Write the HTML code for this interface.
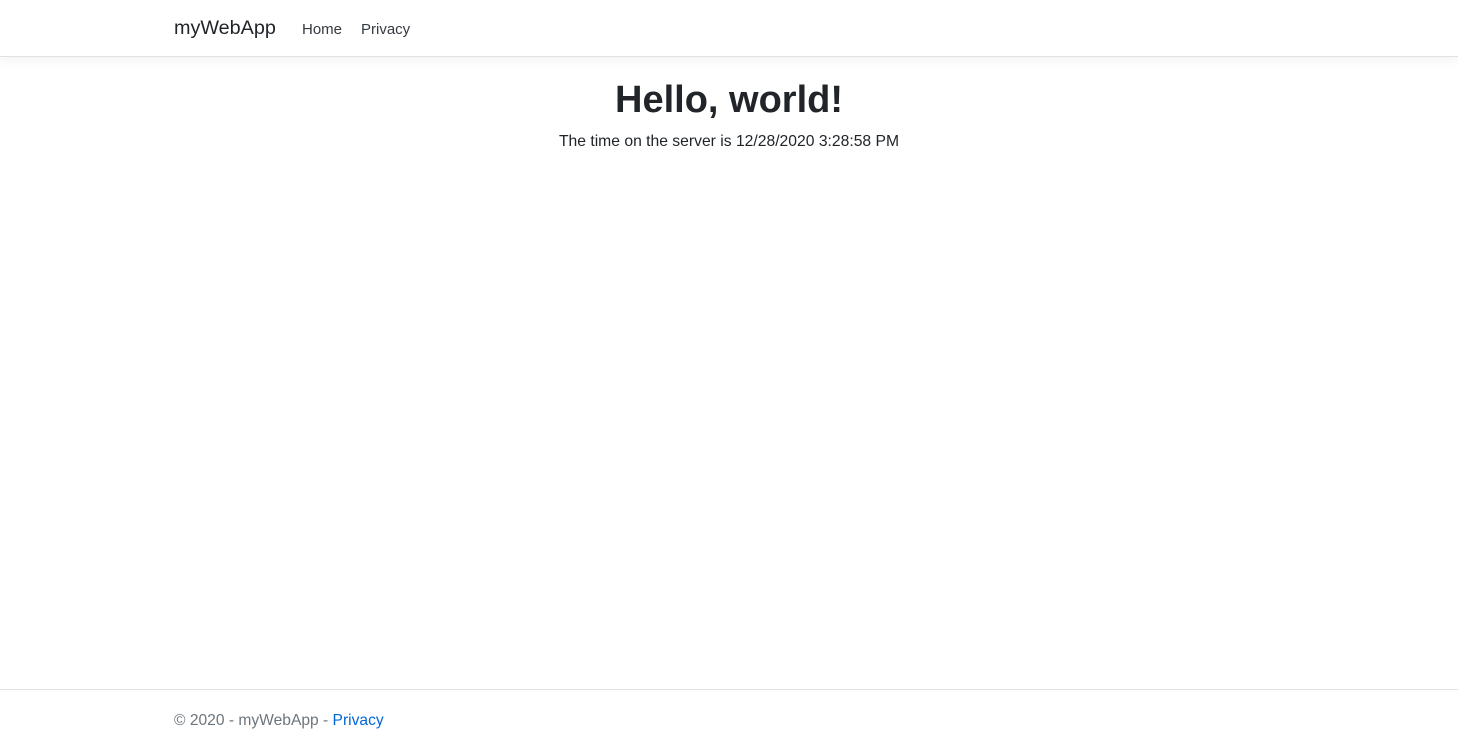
<!DOCTYPE html>
<html><head><meta charset="utf-8"><style>
*{box-sizing:border-box;margin:0;padding:0}
html,body{width:1458px;height:750px;overflow:hidden;background:#fff;font-family:"Liberation Sans",sans-serif;color:#212529}
.nav{position:absolute;left:0;top:0;width:1458px;height:57px;border-bottom:1px solid #dee2e6;box-shadow:0 .25rem .75rem rgba(0,0,0,.05);background:#fff}
.brand{position:absolute;left:174px;top:17px;font-size:19.8px;color:#212529}
.link{position:absolute;top:20px;font-size:15px;color:#343a40}
h1{position:absolute;left:0;width:1458px;top:77px;text-align:center;font-size:38px;font-weight:700;line-height:46px}
p.t{position:absolute;left:0;width:1458px;top:132px;text-align:center;font-size:15.7px;line-height:20px}
.foot{position:absolute;left:0;top:689px;width:1458px;border-top:1px solid #dee2e6;height:61px}
.ft{position:absolute;left:174px;top:712px;font-size:15.6px;color:#6c757d}
.ft span{color:#0366d6}
</style></head><body>
<div class="nav">
<div class="brand">myWebApp</div>
<div class="link" style="left:302px;top:21px">Home</div>
<div class="link" style="left:361px;top:21px">Privacy</div>
</div>
<h1>Hello, world!</h1>
<p class="t">The time on the server is 12/28/2020 3:28:58 PM</p>
<div class="foot"></div>
<div class="ft">© 2020 - myWebApp - <span>Privacy</span></div>
</body></html>
